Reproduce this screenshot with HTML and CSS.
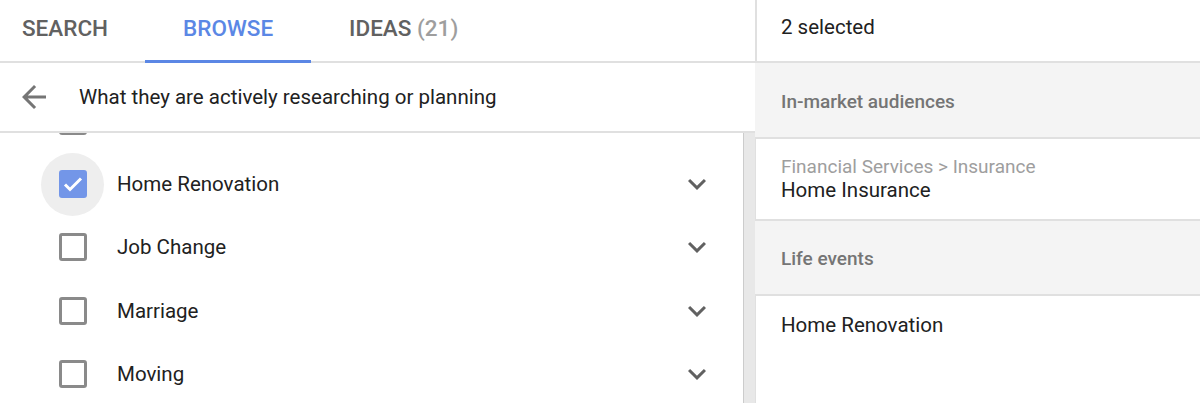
FILE: index.html
```html
<!DOCTYPE html>
<html>
<head>
<meta charset="utf-8">
<link rel="stylesheet" href="styles.css">
</head>
<body>
<div class="app">
  <div class="left">
    <div class="tabs">
      <div class="tab">SEARCH</div>
      <div class="tab active">BROWSE</div>
      <div class="tab">IDEAS <span class="count">(21)</span></div>
    </div>
    <div class="subhead">
      <svg class="back" viewBox="0 0 24 24"><path d="M20 11H7.83l5.59-5.59L12 4l-8 8 8 8 1.41-1.41L7.83 13H20v-2z"/></svg>
      <span class="subtitle">What they are actively researching or planning</span>
    </div>
    <div class="listwrap">
      <div class="list">
        <div class="row">
          <div class="cbwrap"><span class="cb"></span></div>
          <span class="label"></span>
        </div>
        <div class="row">
          <div class="cbwrap focus"><span class="cb checked"><svg viewBox="0 0 24 24"><path d="M4 12.5l5 5L20 6.5" fill="none" stroke="#fff" stroke-width="3"/></svg></span></div>
          <span class="label">Home Renovation</span>
          <svg class="chev" viewBox="0 0 24 24"><path d="M16.59 8.59L12 13.17 7.41 8.59 6 10l6 6 6-6z"/></svg>
        </div>
        <div class="row">
          <div class="cbwrap"><span class="cb"></span></div>
          <span class="label">Job Change</span>
          <svg class="chev" viewBox="0 0 24 24"><path d="M16.59 8.59L12 13.17 7.41 8.59 6 10l6 6 6-6z"/></svg>
        </div>
        <div class="row">
          <div class="cbwrap"><span class="cb"></span></div>
          <span class="label">Marriage</span>
          <svg class="chev" viewBox="0 0 24 24"><path d="M16.59 8.59L12 13.17 7.41 8.59 6 10l6 6 6-6z"/></svg>
        </div>
        <div class="row">
          <div class="cbwrap"><span class="cb"></span></div>
          <span class="label">Moving</span>
          <svg class="chev" viewBox="0 0 24 24"><path d="M16.59 8.59L12 13.17 7.41 8.59 6 10l6 6 6-6z"/></svg>
        </div>
      </div>
      <div class="track"></div>
    </div>
  </div>
  <div class="right">
    <div class="selhead">2 selected</div>
    <div class="group">In-market audiences</div>
    <div class="card">
      <div class="path">Financial Services &gt; Insurance</div>
      <div class="name">Home Insurance</div>
    </div>
    <div class="group second">Life events</div>
    <div class="card single">
      <div class="name">Home Renovation</div>
    </div>
  </div>
</div>
</body>
</html>
```

FILE: styles.css
```css
html, body {
  margin: 0;
  padding: 0;
  background: #fff;
}
body {
  font-family: Roboto, "Noto Sans", sans-serif;
  color: #212121;
  width: 1200px;
  height: 403px;
  overflow: hidden;
}
.app {
  display: grid;
  grid-template-columns: 755px 445px;
  height: 403px;
}
.left {
  display: flex;
  flex-direction: column;
  min-height: 0;
}
.tabs {
  display: flex;
  height: 61px;
  border-bottom: 2px solid #e0e0e0;
}
.tab {
  padding: 0 38px;
  font-size: 22.5px;
  font-weight: 500;
  color: #616161;
  line-height: 56px;
  box-sizing: border-box;
}
.tab:first-child {
  padding-left: 22px;
  padding-right: 37px;
}
.tab.active {
  color: #5b87e5;
  border-bottom: 3px solid #5b87e5;
  height: 63px;
  margin-bottom: -2px;
}
.count {
  color: #9e9e9e;
  font-weight: 500;
}
.subhead {
  display: flex;
  align-items: center;
  height: 68px;
  border-bottom: 2px solid #e0e0e0;
  padding-left: 16px;
  background: #fff;
}
.back {
  width: 36px;
  height: 36px;
  fill: #757575;
}
.subtitle {
  margin-left: 27px;
  font-size: 20.5px;
  color: #212121;
}
.listwrap {
  flex: 1;
  display: flex;
  min-height: 0;
  overflow: hidden;
}
.list {
  flex: 1;
  margin-top: -44px;
}
.track {
  width: 11px;
  border-left: 1px solid #cccccc;
  background: #e8e8e8;
}
.row {
  display: flex;
  align-items: center;
  height: 63.4px;
  padding-left: 41px;
  padding-right: 28px;
}
.cbwrap {
  width: 63px;
  height: 63px;
  border-radius: 50%;
  display: flex;
  align-items: center;
  justify-content: center;
  flex: none;
}
.cbwrap.focus {
  background: #eeeeee;
}
.cb {
  width: 28px;
  height: 28px;
  box-sizing: border-box;
  border: 3px solid #8a8a8a;
  border-radius: 3px;
  display: flex;
  align-items: center;
  justify-content: center;
}
.cb.checked {
  background: #7396e8;
  border-color: #7396e8;
}
.cb svg {
  width: 24px;
  height: 24px;
  flex: none;
}
.label {
  margin-left: 13px;
  font-size: 20.5px;
  flex: 1;
  color: #212121;
}
.chev {
  width: 36px;
  height: 36px;
  fill: #616161;
  flex: none;
}
.right {
  display: flex;
  flex-direction: column;
}
.selhead {
  height: 61px;
  border-bottom: 2px solid #e0e0e0;
  border-left: 2px solid #e0e0e0;
  padding-left: 24px;
  font-size: 20.5px;
  line-height: 55px;
}
.group {
  background: #f4f4f4;
  box-sizing: border-box;
  height: 76px;
  line-height: 77px;
  padding-left: 26px;
  font-size: 19px;
  font-weight: 500;
  color: #757575;
  border-bottom: 2px solid #e0e0e0;
}
.group.second {
  height: 75px;
  line-height: 76px;
}
.card {
  border-left: 1px solid #e0e0e0;
  padding-left: 25px;
  height: 82px;
  box-sizing: border-box;
  border-bottom: 2px solid #e0e0e0;
  padding-top: 17px;
}
.card.single {
  flex: 1;
  border-bottom: none;
  padding-top: 16px;
}
.path {
  font-size: 19px;
  color: #9e9e9e;
  line-height: 22px;
}
.name {
  font-size: 20.5px;
  color: #212121;
  line-height: 24px;
}
.card.single .name {
  line-height: 26px;
}
```
